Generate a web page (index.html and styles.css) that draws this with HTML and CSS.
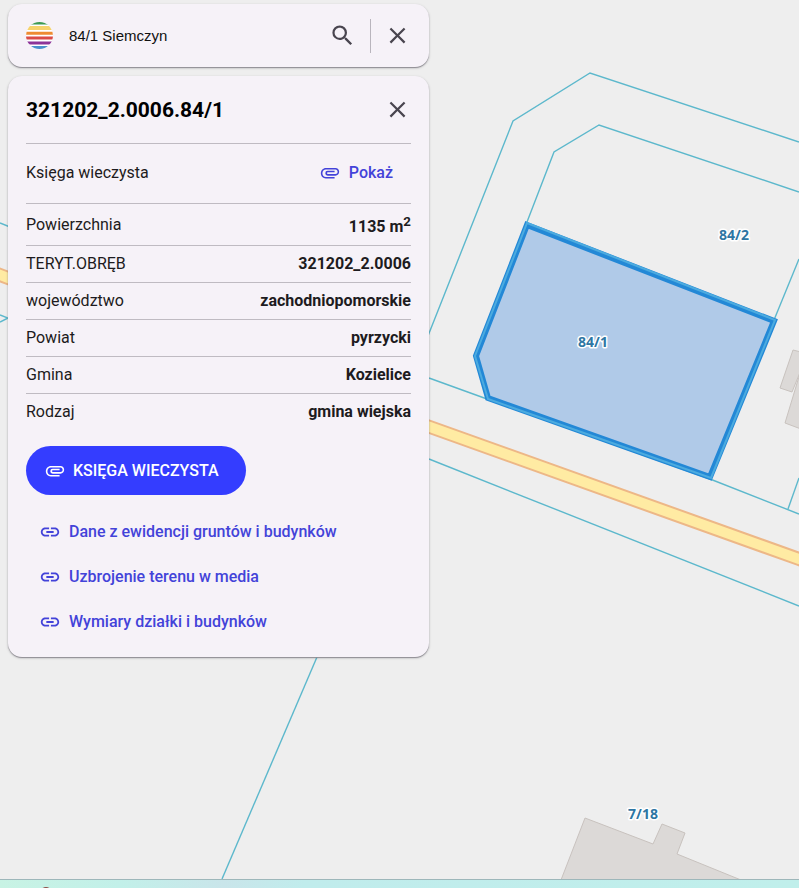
FILE: index.html
```html
<!DOCTYPE html>
<html lang="pl">
<head>
<meta charset="utf-8">
<meta name="viewport" content="width=device-width, initial-scale=1">
<title>84/1 Siemczyn</title>
<link rel="stylesheet" href="styles.css">
</head>
<body>
<svg class="sprite" aria-hidden="true">
  <symbol id="close" viewBox="0 0 24 24"><path d="M19 6.41 17.59 5 12 10.59 6.41 5 5 6.41 10.59 12 5 17.59 6.41 19 12 13.41 17.59 19 19 17.59 13.41 12z"/></symbol>
  <symbol id="search" viewBox="0 0 24 24"><path d="M15.5 14h-.79l-.28-.27A6.47 6.47 0 0 0 16 9.5 6.5 6.5 0 1 0 9.5 16c1.61 0 3.09-.59 4.23-1.57l.27.28v.79l5 4.99L20.49 19zm-6 0C7.01 14 5 11.99 5 9.5S7.01 5 9.5 5 14 7.01 14 9.5 11.99 14 9.5 14"/></symbol>
  <symbol id="attachment" viewBox="0 0 24 24"><path d="M7.5 18C4.46 18 2 15.54 2 12.3S4.46 6.500 7.500 6.500H18c2.210 0 4 1.790 4 4.200s-1.790 4.200-4 4.200H9.500a2.600 2.600 0 0 1 0-5.300H17v1.700H9.410c-.75 0-.75 1.900 0 1.900H18c1.300 0 2.300-1.100 2.300-2.500S19.300 8.200 18 8.200H7.500c-2.100 0-3.800 1.800-3.800 4.100s1.700 4 3.800 4H17V18z"/></symbol>
  <symbol id="link" viewBox="0 0 24 24"><path d="M3.9 12c0-1.71 1.39-3.1 3.1-3.1h4V7H7c-2.76 0-5 2.24-5 5s2.24 5 5 5h4v-1.9H7c-1.71 0-3.1-1.39-3.1-3.1M8 13h8v-2H8zm9-6h-4v1.900h4c1.710 0 3.100 1.390 3.100 3.100s-1.390 3.100-3.100 3.100h-4V17h4c2.760 0 5-2.240 5-5s-2.240-5-5-5"/></symbol>
</svg>

<main class="stage">
  <svg class="map" viewBox="0 0 799 879" preserveAspectRatio="xMinYMin slice" role="img" aria-label="Mapa działek">
    <g class="building">
      <path d="M561 880 585 818 653 844 662 824 685 833 677 854 741 880z"/>
      <path d="M801 352 793 350 780 388 792 392 801 370z"/>
      <path d="M801 370 785 423 801 429z"/>
    </g>
    <path class="road-edge" d="M-5 273 8 278 430 427 799 559 810 563"/>
    <path class="road" d="M-5 273 8 278 430 427 799 559 810 563"/>
    <g class="boundary">
      <path d="M424 346 513 121 590 73 799 142"/>
      <path d="M527 222 554 152 599 125 799 192"/>
      <path d="M774 320 799 259"/>
      <path d="M429 378 487 399 710 479 799 514"/>
      <path d="M788 509 799 478"/>
      <path d="M429 459 799 606"/>
      <path d="M317 657 222 879"/>
      <path d="M0 223 10 227M0 315 8 318 0 322"/>
    </g>
    <path class="parcel" d="M527 225 774 321 710 477 488 398 476 356z"/>
    <path class="parcel-line" d="M527 223 775 320 711 478 488 399 475 356z"/>
    <g class="parcel-label">
      <text x="593" y="347">84/1</text>
      <text x="734" y="240">84/2</text>
      <text x="643" y="819">7/18</text>
    </g>
  </svg>

  <div class="panel">
    <form class="card search">
      <svg class="logo" viewBox="0 0 27 27" aria-hidden="true">
        <clipPath id="disc"><circle cx="13.5" cy="13.5" r="13.5"/></clipPath>
        <g clip-path="url(#disc)">
          <path fill="#fff" d="M0 0h27v27H0z"/>
          <path fill="#3f9a53" d="M0 0h27v2.6H0z"/>
          <path fill="#f6d36c" d="M0 4h27v4H0z"/>
          <path fill="#ee8b32" d="M0 9.7h27v3H0z"/>
          <path fill="#da4b47" d="M0 14.4h27v3H0z"/>
          <path fill="#8d3499" d="M0 19.4h27v3H0z"/>
          <path fill="#4a8fcc" d="M0 24h27v3H0z"/>
        </g>
      </svg>
      <input class="search-input" type="text" value="84/1 Siemczyn" aria-label="Szukaj działki">
      <button class="icon-button" type="submit" aria-label="Szukaj"><svg class="icon-large"><use href="#search"/></svg></button>
      <span class="divider"></span>
      <button class="icon-button" type="button" aria-label="Wyczyść"><svg class="icon-large"><use href="#close"/></svg></button>
    </form>

    <section class="card details">
      <header class="details-head">
        <h1 class="title">321202_2.0006.84/1</h1>
        <button class="icon-button" type="button" aria-label="Zamknij"><svg class="icon-large"><use href="#close"/></svg></button>
      </header>
      <table class="facts">
        <tr class="register"><th scope="row">Księga wieczysta</th><td><a class="show" href="#ksiega"><svg class="icon"><use href="#attachment"/></svg>Pokaż</a></td></tr>
        <tr><th scope="row">Powierzchnia</th><td>1135 m<sup>2</sup></td></tr>
        <tr><th scope="row">TERYT.OBRĘB</th><td>321202_2.0006</td></tr>
        <tr><th scope="row">województwo</th><td>zachodniopomorskie</td></tr>
        <tr><th scope="row">Powiat</th><td>pyrzycki</td></tr>
        <tr><th scope="row">Gmina</th><td>Kozielice</td></tr>
        <tr><th scope="row">Rodzaj</th><td>gmina wiejska</td></tr>
      </table>
      <button class="primary" type="button"><svg class="icon"><use href="#attachment"/></svg>KSIĘGA WIECZYSTA</button>
      <nav class="links">
        <a href="#ewidencja"><svg class="icon"><use href="#link"/></svg>Dane z ewidencji gruntów i budynków</a>
        <a href="#media"><svg class="icon"><use href="#link"/></svg>Uzbrojenie terenu w media</a>
        <a href="#wymiary"><svg class="icon"><use href="#link"/></svg>Wymiary działki i budynków</a>
      </nav>
    </section>
  </div>
</main>
<footer class="bottom-bar"><span class="marker"></span></footer>
</body>
</html>
```
FILE: styles.css
```css
* { box-sizing: border-box; }

body {
  margin: 0;
  min-height: 100vh;
  display: flex;
  flex-direction: column;
  background: #eee;
  color: #1d1b20;
  font: 16px/24px Roboto, sans-serif;
}

svg { fill: currentColor; flex: none; }
.sprite { position: absolute; width: 0; height: 0; }
button { font: inherit; border: 0; cursor: pointer; }
a { color: #4343d9; text-decoration: none; font-weight: 500; }
.icon { width: 22px; height: 22px; }
.icon-large { width: 27px; height: 27px; }

.stage { position: relative; flex: 1; overflow: hidden; }
.map { position: absolute; inset: 0; width: 100%; height: 100%; }
.building { fill: #dcd9d7; stroke: #c8c2be; }
.road, .road-edge, .boundary, .parcel-line { fill: none; }
.road-edge { stroke: #edb787; stroke-width: 14px; }
.road { stroke: #ffeba3; stroke-width: 10px; }
.boundary { stroke: #5cb8cc; stroke-width: 1.4px; }
.parcel { fill: #b0cae8; stroke: #2388d6; stroke-width: 6px; }
.parcel-line { stroke: #4cabdf; stroke-width: 2px; }
.parcel-label {
  fill: #2e76a3;
  stroke: #fff;
  stroke-width: 3px;
  stroke-linejoin: round;
  paint-order: stroke;
  font: 700 14px "Open Sans", sans-serif;
  text-anchor: middle;
}

.panel {
  position: relative;
  display: flex;
  flex-direction: column;
  gap: 9px;
  width: 100%;
  max-width: 437px;
  padding: 4px 8px 16px;
}
.card {
  background: #f6f2f8;
  border-radius: 14px;
  box-shadow: 0 1px 1px #8f8d94, 0 1px 3px #0003;
  padding: 0 18px;
}

.search { display: flex; align-items: center; height: 63px; }
.logo { width: 27px; height: 27px; }
.search-input {
  flex: 1;
  min-width: 0;
  margin-left: 16px;
  padding: 0;
  border: 0;
  outline: 0;
  background: none;
  color: #111;
  font: 15px "Liberation Sans", sans-serif;
}
.icon-button {
  display: grid;
  place-items: center;
  width: 27px;
  height: 36px;
  padding: 0;
  background: none;
  color: #49454f;
}
.divider { width: 1px; height: 34px; margin: 0 13px 0 14px; background: #b9b5bd; }

.details { padding-bottom: 13px; }
.details-head {
  display: flex;
  align-items: center;
  justify-content: space-between;
  height: 67px;
}
.title { margin: 0; color: #000; font-size: 21px; line-height: 28px; }

.facts { width: 100%; border-collapse: collapse; }
.facts tr { border-top: 1px solid #bfbbc2; }
.facts th, .facts td { padding: 6px 0; vertical-align: middle; }
.facts th { font-weight: 400; text-align: left; }
.facts td { font-weight: 700; text-align: right; }
.facts .register > * { padding: 17px 0 18px; }
.show { display: flex; align-items: center; justify-content: flex-end; gap: 8px; padding-right: 18px; }

.primary {
  display: flex;
  align-items: center;
  gap: 7px;
  height: 49px;
  margin-top: 16px;
  padding: 0 27px 0 18px;
  border-radius: 25px;
  background: #343dff;
  color: #fff;
  font-weight: 500;
}

.links { display: flex; flex-direction: column; margin-top: 14px; padding-left: 13px; }
.links a { display: flex; align-items: center; gap: 8px; min-height: 45px; }

.bottom-bar {
  height: 9px;
  overflow: hidden;
  padding-left: 40px;
  border-top: 1px solid #9db7ba;
  background: linear-gradient(90deg, #c8f3e4, #c2f0e9 15%, #c9e5ea 28%, #c0ecec 38%, #c0efeb);
}
.marker { display: block; width: 12px; height: 12px; margin-top: 7px; border-radius: 50%; background: #8d4b45; }
```
